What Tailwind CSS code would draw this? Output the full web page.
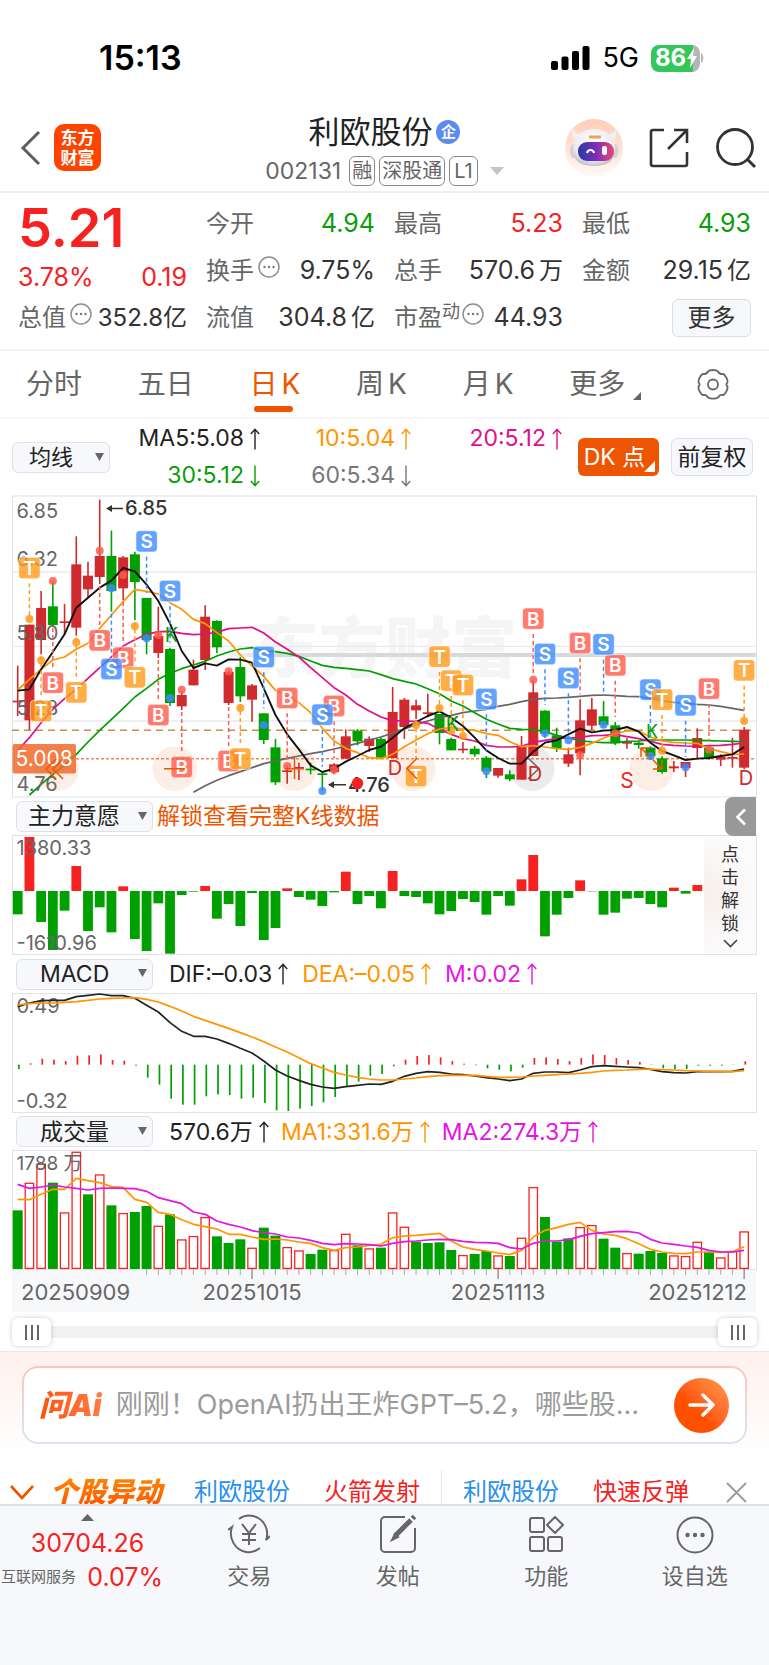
<!DOCTYPE html>
<html lang="zh-CN">
<head>
<meta charset="utf-8">
<meta name="viewport" content="width=device-width, initial-scale=1">
<title>利欧股份 002131</title>
<script src="https://cdn.jsdelivr.net/npm/@tailwindcss/browser@4"></script>
</head>
<body class="bg-white text-[#333] font-['Inter','Noto_Sans_CJK_SC',sans-serif]">
<svg class="hidden" aria-hidden="true">
  <symbol id="up" viewBox="0 0 10 22"><path d="M5 21.500V1.500M.8 6 5 1.300 9.200 6" fill="none" stroke="currentColor" stroke-width="1.400"/></symbol>
  <symbol id="down" viewBox="0 0 10 22"><path d="M5 .5v20M.8 16 5 20.700 9.200 16" fill="none" stroke="currentColor" stroke-width="1.400"/></symbol>
  <symbol id="info" viewBox="0 0 22 22"><circle cx="11" cy="11" r="10" fill="none" stroke="#8f8f8f" stroke-width="1.500"/><g fill="#777"><circle cx="6.500" cy="11" r="1.200"/><circle cx="11" cy="11" r="1.200"/><circle cx="15.500" cy="11" r="1.200"/></g></symbol>
</svg>

<div class="flex h-[112px] items-center justify-between pt-1 pl-[99px] pr-[65px] text-black">
  <span class="text-[34px] leading-10 font-semibold">15:13</span>
  <div class="flex items-center">
    <svg class="h-6 w-10" viewBox="0 0 40 24"><g><rect x="1" y="15" width="7" height="9" rx="2"/><rect x="11.500" y="10.500" width="7" height="13.500" rx="2"/><rect x="22" y="5" width="7" height="19" rx="2"/><rect x="32.500" y="0" width="7" height="24" rx="2"/></g></svg>
    <span class="ml-3 text-[27px] leading-8">5G</span>
    <span class="relative ml-3 flex h-[27px] w-[49px] items-center overflow-hidden rounded-lg bg-[linear-gradient(90deg,#34c759_86%,#b5b5b5_86%)] pl-1 text-[24px] leading-7 font-bold text-white">86
      <svg class="h-5 w-3" viewBox="0 0 12 20"><path d="M8 0 1 11h4l-1 9 7-12H7z" fill="#fff"/></svg></span>
    <svg class="h-3 w-1" viewBox="0 0 4 12"><path d="M1 1c3 1 3 9 0 10z" fill="#b5b5b5"/></svg>
  </div>
</div>

<header class="grid h-[81px] grid-cols-[1fr_auto_1fr] border-b-2 border-[#eee]">
  <div class="flex items-center gap-3 pb-2 pl-5">
    <button aria-label="返回"><svg class="h-9 w-[22px]" viewBox="0 0 22 36"><path d="M19 2 3 18l16 16" fill="none" stroke="#5e5e5e" stroke-width="3"/></svg></button>
    <a href="#" class="flex h-[47px] w-[47px] flex-col items-center justify-center rounded-[10px] bg-[#ff4400] text-[17px] leading-[20px] font-bold text-white"><span>东方</span><span>财富</span></a>
  </div>
  <div class="flex flex-col items-center">
    <h1 class="flex items-center gap-1 text-[31px] leading-[40px] text-[#222]">利欧股份<span class="flex h-6 w-6 items-center justify-center rounded-full bg-[#5b8bee] text-[15px] leading-5 font-bold text-white">企</span></h1>
    <div class="mt-1 flex items-center gap-1 text-[23px] leading-7 text-[#666]">
      <span class="mr-1">002131</span>
      <span class="rounded-md border border-[#888] px-0.5 text-[20px]">融</span>
      <span class="rounded-md border border-[#888] px-0.5 text-[20px]">深股通</span>
      <span class="rounded-md border border-[#888] px-1 text-[20px]">L1</span>
      <svg class="ml-2 h-2 w-[14px]" viewBox="0 0 14 8"><path d="M0 0h14L7 8z" fill="#c4c4c4"/></svg>
    </div>
  </div>
  <div class="flex items-center justify-end gap-[26px] pr-[12px] pb-2">
    <button aria-label="智能助手"><svg class="h-[58px] w-[58px]" viewBox="0 0 58 58">
      <defs><linearGradient id="halo" x2="0" y2="1"><stop stop-color="#ffcdb5"/><stop offset="1" stop-color="#fffaf7"/></linearGradient>
      <linearGradient id="visor" x2="1" y2="0"><stop stop-color="#2739a6"/><stop offset=".5" stop-color="#7a2fb5"/><stop offset="1" stop-color="#e84a78"/></linearGradient>
      <radialGradient id="helmet" cx=".5" cy=".35" r=".7"><stop stop-color="#fff"/><stop offset=".7" stop-color="#eceaf0"/><stop offset="1" stop-color="#b9b4c0"/></radialGradient></defs>
      <circle cx="29" cy="29" r="29" fill="url(#halo)"/>
      <path d="M9 21C6 17 7 12 8 10c1 3 4 5 8 6zM49 21c3-4 3-9 2-11-1 3-4 5-8 6z" fill="#f4f0f2"/>
      <ellipse cx="8.500" cy="32" rx="3.500" ry="7" fill="#d5d1db"/><ellipse cx="50" cy="32" rx="3.500" ry="7" fill="#d5d1db"/>
      <path d="M29 10c13 0 21 8 21 20S43 47 29 47 8 42 8 30s8-20 21-20z" fill="url(#helmet)"/>
      <path d="M24 18h12" stroke="#eda35b" stroke-width="3"/>
      <rect x="13" y="23" width="36" height="19" rx="9" fill="url(#visor)"/>
      <path d="M22 34c1-4 6-4 7 0" fill="none" stroke="#fff" stroke-width="2"/><rect x="37" y="27" width="5" height="9" rx="2" fill="#fff"/>
    </svg></button>
    <button aria-label="分享"><svg class="h-10 w-10" viewBox="0 0 40 40"><path d="M15 2H4a2 2 0 0 0-2 2v32a2 2 0 0 0 2 2h32a2 2 0 0 0 2-2V24M25 2h13v13M38 2 19 21" fill="none" stroke="#333" stroke-width="2.600"/></svg></button>
    <button aria-label="搜索"><svg class="h-[42px] w-[42px]" viewBox="0 0 42 42"><circle cx="20" cy="20" r="17.500" fill="none" stroke="#333" stroke-width="2.800"/><path d="m32 32 8 8" stroke="#333" stroke-width="3"/></svg></button>
  </div>
</header>

<section class="grid grid-cols-4 gap-x-[19px] border-b-2 border-[#f4f4f4] px-[18px] pt-[7px] pb-[8px] text-[25px] leading-[47px] text-[#333]">
  <div class="flex flex-col">
    <div class="h-[58px] text-[54px] leading-[56px] font-semibold text-[#f62222]">5.21</div>
    <div class="flex h-[36px] justify-between leading-[38px] text-[#f62222]"><span>3.78%</span><span>0.19</span></div>
    <div class="flex h-[47px] items-center justify-between whitespace-nowrap text-[24px]"><span class="flex items-center text-[24px] text-[#666]">总值<svg class="mb-2 ml-1 h-[22px] w-[22px]"><use href="#info"/></svg></span><span>352.8亿</span></div>
  </div>
  <div class="whitespace-nowrap">
    <div class="flex h-[47px] justify-between"><span class="text-[24px] text-[#666]">今开</span><span class="text-[#0a9d0a]">4.94</span></div>
    <div class="flex h-[47px] justify-between"><span class="flex items-center text-[24px] text-[#666]">换手<svg class="mb-2 ml-1 h-[22px] w-[22px]"><use href="#info"/></svg></span><span>9.75%</span></div>
    <div class="flex h-[47px] justify-between"><span class="text-[24px] text-[#666]">流值</span><span>304.8<span class="ml-1 text-[24px]">亿</span></span></div>
  </div>
  <div class="whitespace-nowrap">
    <div class="flex h-[47px] justify-between"><span class="text-[24px] text-[#666]">最高</span><span class="text-[#f62222]">5.23</span></div>
    <div class="flex h-[47px] justify-between"><span class="text-[24px] text-[#666]">总手</span><span>570.6<span class="ml-1 text-[24px]">万</span></span></div>
    <div class="flex h-[47px] justify-between"><span class="flex items-center text-[24px] text-[#666]">市盈<span class="mb-3 text-[18px] leading-6">动</span><svg class="mb-2 ml-0.5 h-[22px] w-[22px]"><use href="#info"/></svg></span><span>44.93</span></div>
  </div>
  <div class="whitespace-nowrap">
    <div class="flex h-[47px] justify-between"><span class="text-[24px] text-[#666]">最低</span><span class="text-[#0a9d0a]">4.93</span></div>
    <div class="flex h-[47px] justify-between"><span class="text-[24px] text-[#666]">金额</span><span>29.15<span class="ml-1 text-[24px]">亿</span></span></div>
    <div class="flex h-[47px] items-center justify-end"><button class="h-[38px] w-[79px] rounded-md border border-[#dcdde2] bg-[#f7f8fb] text-[24px] leading-8">更多</button></div>
  </div>
</section>

<nav class="flex h-[68px] items-center justify-between border-b-2 border-[#f6f6f6] px-[26px] text-[28px] leading-10 text-[#666]">
  <a href="#">分时</a><a href="#">五日</a>
  <a href="#" class="relative flex gap-1 text-[#ee5500]"><span>日</span><span>K</span><span class="absolute -bottom-2 left-1 h-[6px] w-[39px] rounded-full bg-[#ee5500]"></span></a>
  <a href="#" class="flex gap-1"><span>周</span><span>K</span></a><a href="#" class="flex gap-1"><span>月</span><span>K</span></a>
  <a href="#" class="flex items-end">更多<svg class="mb-1 ml-2 h-2 w-2" viewBox="0 0 8 8"><path d="M8 0v8H0z" fill="#666"/></svg></a>
  <button aria-label="设置" class="mr-[14px]"><svg class="h-8 w-8" viewBox="0 0 32 32"><path d="M11 3.500c2-2 8-2 10 0 1 2 3 3 5.500 2.500C29 8 31 12 30.500 14.500c-1.500 1-1.500 2.500 0 4C31 21 29 25 26.500 27c-2.500-.5-4.500.5-5.500 2.500-2 1.500-8 1.500-10 0-1-2-3-3-5.500-2.500C3 25 1 21 1.500 18.500c1.500-1.500 1.500-3 0-4C1 12 3 8 5.500 6 8 6.500 10 5.500 11 3.500z" fill="none" stroke="#666" stroke-width="1.800"/><circle cx="16" cy="16.500" r="5" fill="none" stroke="#666" stroke-width="1.800"/></svg></button>
</nav>

<section class="flex h-[76px] items-center pr-[16px] pl-3">
  <div class="relative">
    <select aria-label="主图指标" class="h-[31px] w-[98px] appearance-none rounded-md border border-[#dfe1e6] bg-[#f7f8fb] pl-4 text-[22px] leading-7 text-[#222]"><option>均线</option></select>
    <svg class="pointer-events-none absolute top-[11px] right-[6px] h-2 w-[9px]" viewBox="0 0 9 8"><path d="M0 0h9L4.500 8z" fill="#666"/></svg></div>
  <dl class="mr-4 ml-auto grid grid-cols-[auto_auto_auto] gap-x-[34px] text-right text-[23px] leading-[37px]">
    <div class="flex items-center justify-end text-[#222]">MA5:5.08<svg class="ml-1.5 h-[22px] w-[10px]"><use href="#up"/></svg></div>
    <div class="flex w-[117px] items-center justify-end text-[#ff9500]">10:5.04<svg class="ml-1.5 h-[22px] w-[10px]"><use href="#up"/></svg></div>
    <div class="flex w-[117px] items-center justify-end text-[#e0108a]">20:5.12<svg class="ml-1.5 h-[22px] w-[10px]"><use href="#up"/></svg></div>
    <div class="flex items-center justify-end text-[#0a9d0a]">30:5.12<svg class="ml-1.5 h-[22px] w-[10px]"><use href="#down"/></svg></div>
    <div class="flex items-center justify-end text-[#777]">60:5.34<svg class="ml-1.5 h-[22px] w-[10px]"><use href="#down"/></svg></div>
  </dl>
  <div class="flex gap-3">
    <button class="relative h-[38px] w-[81px] rounded-md bg-[#ee5500] pr-2 text-[23px] leading-8 text-white">DK 点<svg class="absolute right-1 bottom-1 h-[11px] w-[11px]" viewBox="0 0 11 11"><path d="M11 0v11H0z" fill="#fff"/></svg></button>
    <button class="h-[38px] w-[82px] rounded-md border border-[#dfe1e6] bg-[#f7f8fb] text-[23px] leading-8 text-[#222]">前复权</button>
  </div>
</section>

<svg id="kline" class="block w-full" viewBox="0 4 769 304" role="img" aria-label="日K线图"></svg>

<div class="relative">
  <div class="flex h-[34px] items-center pl-4">
    <div class="relative">
      <select aria-label="副图一指标" class="h-[31px] w-[137px] appearance-none rounded-md border border-[#dfe1e6] bg-[#f7f8fb] pl-[11px] text-[23px] leading-7 text-[#222]"><option>主力意愿</option></select>
      <svg class="pointer-events-none absolute top-[11px] right-[6px] h-2 w-[9px]" viewBox="0 0 9 8"><path d="M0 0h9L4.500 8z" fill="#666"/></svg></div>
    <a href="#" class="ml-1 text-[23px] leading-8 text-[#ee5500]">解锁查看完整K线数据</a>
  </div>
  <svg id="will" class="block w-full" viewBox="0 42 769 123" role="img" aria-label="主力意愿"></svg>
  <button aria-label="展开" class="absolute -top-0.5 right-[13px] flex h-[39px] w-[31px] items-center justify-center rounded-l-lg bg-[#999]"><svg class="h-[18px] w-3" viewBox="0 0 12 18"><path d="m10 1.500-7.500 7.500 7.500 7.500" fill="none" stroke="#fff" stroke-width="2.600"/></svg></button>
  <button class="absolute top-[37px] right-[13px] flex h-[118px] w-[52px] flex-col items-center justify-center bg-[radial-gradient(ellipse_at_left,#f7efea,#fbfbfc_70%)] text-[18px] leading-[23px] text-[#333]"><span>点</span><span>击</span><span>解</span><span>锁</span><svg class="mt-1 h-[9px] w-[15px]" viewBox="0 0 15 9"><path d="m1 1 6.500 6.500L14 1" fill="none" stroke="#444" stroke-width="1.600"/></svg></button>
</div>

<div class="flex h-[36px] items-center pl-4 text-[23px] leading-8">
  <div class="relative mr-4">
    <select aria-label="副图二指标" class="h-[31px] w-[137px] appearance-none rounded-md border border-[#dfe1e6] bg-[#f7f8fb] pl-[23px] text-[23px] leading-7 text-[#222]"><option>MACD</option></select>
    <svg class="pointer-events-none absolute top-[11px] right-[6px] h-2 w-[9px]" viewBox="0 0 9 8"><path d="M0 0h9L4.500 8z" fill="#666"/></svg></div>
  <span class="flex items-center text-[#222]">DIF:–0.03<svg class="mx-1.5 h-[22px] w-[10px]"><use href="#up"/></svg></span>
  <span class="ml-2 flex items-center text-[#ff9500]">DEA:–0.05<svg class="mx-1.5 h-[22px] w-[10px]"><use href="#up"/></svg></span>
  <span class="ml-2 flex items-center text-[#e414e4]">M:0.02<svg class="mx-1.5 h-[22px] w-[10px]"><use href="#up"/></svg></span>
</div>
<svg id="macd" class="block w-full" viewBox="0 1 769 122" role="img" aria-label="MACD"></svg>

<div class="flex h-[35px] items-center pl-4 text-[23px] leading-8">
  <div class="relative mr-4">
    <select aria-label="副图三指标" class="h-[31px] w-[137px] appearance-none rounded-md border border-[#dfe1e6] bg-[#f7f8fb] pl-[23px] text-[23px] leading-7 text-[#222]"><option>成交量</option></select>
    <svg class="pointer-events-none absolute top-[11px] right-[6px] h-2 w-[9px]" viewBox="0 0 9 8"><path d="M0 0h9L4.500 8z" fill="#666"/></svg></div>
  <span class="flex items-center text-[#222]">570.6万<svg class="mx-1.5 h-[22px] w-[10px]"><use href="#up"/></svg></span>
  <span class="ml-1.5 flex items-center text-[#ff9500]">MA1:331.6万<svg class="mx-1.5 h-[22px] w-[10px]"><use href="#up"/></svg></span>
  <span class="ml-1.5 flex items-center text-[#e414e4]">MA2:274.3万<svg class="mx-1.5 h-[22px] w-[10px]"><use href="#up"/></svg></span>
</div>
<svg id="volume" class="block w-full" viewBox="0 98 769 163" role="img" aria-label="成交量"></svg>

<div class="border-b border-[#e8e8ea] px-3 pt-[6px] pb-[5px]">
  <div class="relative h-7">
    <div class="absolute inset-x-2 top-2 h-3 bg-[#f1f1f4]"></div>
    <input aria-label="起始日期" type="range" value="0" class="pointer-events-none absolute inset-0 h-7 w-full appearance-none bg-transparent [&::-webkit-slider-thumb]:pointer-events-auto [&::-webkit-slider-thumb]:h-7 [&::-webkit-slider-thumb]:w-[39px] [&::-webkit-slider-thumb]:appearance-none [&::-webkit-slider-thumb]:rounded-md [&::-webkit-slider-thumb]:bg-white [&::-webkit-slider-thumb]:bg-[linear-gradient(90deg,#666_0_2px,transparent_2px_6px,#666_6px_8px,transparent_8px_12px,#666_12px_14px)] [&::-webkit-slider-thumb]:bg-[length:14px_15px] [&::-webkit-slider-thumb]:bg-center [&::-webkit-slider-thumb]:bg-no-repeat [&::-webkit-slider-thumb]:shadow-[0_0_5px_rgba(0,0,0,0.2)]">
    <input aria-label="结束日期" type="range" value="100" class="pointer-events-none absolute inset-0 h-7 w-full appearance-none bg-transparent [&::-webkit-slider-thumb]:pointer-events-auto [&::-webkit-slider-thumb]:h-7 [&::-webkit-slider-thumb]:w-[39px] [&::-webkit-slider-thumb]:appearance-none [&::-webkit-slider-thumb]:rounded-md [&::-webkit-slider-thumb]:bg-white [&::-webkit-slider-thumb]:bg-[linear-gradient(90deg,#666_0_2px,transparent_2px_6px,#666_6px_8px,transparent_8px_12px,#666_12px_14px)] [&::-webkit-slider-thumb]:bg-[length:14px_15px] [&::-webkit-slider-thumb]:bg-center [&::-webkit-slider-thumb]:bg-no-repeat [&::-webkit-slider-thumb]:shadow-[0_0_5px_rgba(0,0,0,0.2)]">
  </div>
</div>

<section class="bg-linear-to-b from-[#fff1ec] to-white px-[22px] pt-[14px] pb-[14px]">
  <div class="rounded-2xl bg-linear-to-b from-[#ffc5b8] to-[#dbe4f8] p-0.5">
    <div class="flex h-[74px] items-center gap-[10px] rounded-[14px] bg-white pr-4 pl-[15px]">
      <span class="bg-linear-to-r from-[#ff5200] to-[#ff7d45] bg-clip-text pr-1 text-[30px] leading-10 font-black text-transparent italic">问Ai</span>
      <input aria-label="问AI" placeholder="刚刚！OpenAI扔出王炸GPT–5.2，哪些股…" class="min-w-0 flex-1 bg-transparent text-[27px] leading-10 outline-none placeholder:text-[#9b9b9b]">
      <button aria-label="发送" class="flex h-[55px] w-[55px] items-center justify-center rounded-full bg-linear-to-tr from-[#ff5000] from-40% to-[#ff9a4d]"><svg class="h-6 w-7" viewBox="0 0 28 24"><path d="M2 12h23M15 2l10 10-10 10" fill="none" stroke="#fff" stroke-width="3.400" stroke-linecap="round" stroke-linejoin="round"/></svg></button>
    </div>
  </div>
</section>

<section class="flex h-[46px] items-start overflow-hidden pt-4 pr-[22px] pl-[10px] text-[24px] leading-9 whitespace-nowrap">
  <button aria-label="收起" class="flex h-9 items-center"><svg class="h-[15px] w-6" viewBox="0 0 24 15"><path d="m1 1 11 12L23 1" fill="none" stroke="#ee5500" stroke-width="2.600"/></svg></button>
  <strong class="ml-4 bg-linear-to-b from-[#ff8a00] to-[#ff4d00] bg-clip-text pr-1 text-[28px] font-black text-transparent italic">个股异动</strong>
  <div class="flex flex-1 pl-[28px]">
    <a href="#" class="text-[#2a8fee]">利欧股份</a><a href="#" class="ml-[34px] text-[#f62222]">火箭发射</a>
    <span class="mx-[21px] -mt-1 h-12 w-px bg-[#e8e8e8]"></span>
    <a href="#" class="text-[#2a8fee]">利欧股份</a><a href="#" class="ml-[34px] text-[#f62222]">快速反弹</a>
    <button aria-label="关闭" class="ml-auto h-9"><svg class="h-[21px] w-[21px]" viewBox="0 0 21 21"><path d="m1 1 19 19M20 1 1 20" stroke="#999" stroke-width="1.800"/></svg></button>
  </div>
</section>

<footer class="flex h-[162px] border-t-2 border-[#dedfe3] bg-[#f7f8fb] text-[#666]">
  <a href="#" class="flex w-[175px] flex-col items-center whitespace-nowrap text-[#f62222]">
    <svg class="mt-2 h-[7px] w-[13px]" viewBox="0 0 13 7"><path d="M0 7h13L6.500 0z" fill="#666"/></svg>
    <span class="mt-1 text-[25px] leading-9">30704.26</span>
    <span class="flex w-full items-center justify-between pr-3 pl-px text-[25px] leading-8"><span class="text-[15px] text-[#666]">互联网服务</span>0.07%</span>
  </a>
  <a href="#" class="flex flex-1 flex-col items-center pt-2 text-[22px] leading-9">
    <svg class="mb-1 h-10 w-[42px]" viewBox="0 0 42 40" fill="none" stroke="#666" stroke-width="2"><path d="M11 5C15 2 20 1 25 2c10 2 17 13 13 24l4-4M32 34c-4 3-9 5-14 4C7 36 0 24 4 13l-4 3"/><path d="m14 10 7 9 7-9M21 19v12M14 20h14M14 26h14"/></svg>交易</a>
  <a href="#" class="flex flex-1 flex-col items-center pt-2 text-[22px] leading-9">
    <svg class="mb-1 h-10 w-10" viewBox="0 0 40 40" fill="none" stroke="#666" stroke-width="2"><path d="M27 3H7a4 4 0 0 0-4 4v27a4 4 0 0 0 4 4h26a4 4 0 0 0 4-4V14"/><path d="M33 6 17 22M34.500 4.500 36.500 2.500" stroke-width="5"/><path d="m17 20-3 6 6-3z" fill="#666"/></svg>发帖</a>
  <a href="#" class="flex flex-1 flex-col items-center pt-2 text-[22px] leading-9">
    <svg class="mb-1 h-10 w-10" viewBox="0 0 40 40" fill="none" stroke="#666" stroke-width="2"><rect x="4" y="4" width="14" height="14" rx="2"/><rect x="4" y="23" width="14" height="14" rx="2"/><rect x="22" y="23" width="14" height="14" rx="2"/><path d="m29 3 8 8-8 8-8-8z" stroke-linejoin="round"/></svg>功能</a>
  <a href="#" class="flex flex-1 flex-col items-center pt-2 text-[22px] leading-9">
    <svg class="mb-1 h-10 w-10" viewBox="0 0 40 40" fill="none" stroke="#666" stroke-width="2"><circle cx="20" cy="21" r="17.500"/><g fill="#666" stroke="none"><circle cx="12.500" cy="21" r="2.200"/><circle cx="20" cy="21" r="2.200"/><circle cx="27.500" cy="21" r="2.200"/></g></svg>设自选</a>
</footer>

<script>
// Series values are stored in thirds of a chart unit, one entry per trading day.
const RED = '#d02a2e', GREEN = '#00a000', HOT = '#f62222';
const X = i => 17.7 + 11.717 * i, Y = v => v / 3;
const line = (x1, y1, x2, y2, c, w = 1, extra = '') => `<line x1="${x1}" y1="${y1}" x2="${x2}" y2="${y2}" stroke="${c}" stroke-width="${w}" ${extra}/>`;
const rect = (x, y, w, h, c, extra = '') => `<rect x="${x}" y="${y}" width="${w}" height="${h}" fill="${c}" ${extra}/>`;
const text = (x, y, s, c = '#666', size = 20, extra = '') => `<text x="${x}" y="${y}" fill="${c}" font-size="${size}" ${extra}>${s}</text>`;
const poly = (vals, c, start = 0, w = 1.7) => `<polyline fill="none" stroke="${c}" stroke-width="${w}" stroke-linejoin="round" points="${vals.map((v, i) => X(i + start) + ',' + Y(v)).join(' ')}"/>`;
const frame = (y, h) => `<rect x="12.500" y="${y}" width="744" height="${h}" fill="none" stroke="#e0e2e6"/>`;

// [colour, high, body top, body bottom, low]
const candles = `R524,629,634,675 R401,401,688,717 R300,351,447,490 G270,346,402,405 R339,391,396,430 R136,220,410,434 R212,254,295,319 R26,195,258,279 G119,195,300,362 R195,199,292,327 G182,190,273,388 G321,321,447,490 R347,435,486,501 G470,474,636,645 R600,612,646,657 R506,536,583,583 R343,377,507,537 G388,390,469,486 R540,543,636,642 G498,528,616,633 R579,583,626,692
G667,667,747,759 G744,769,874,882 R825,838,843,878 R815,828,834,867 G815,833,838,850 G842,847,852,900 R817,820,843,850 R715,736,803,803 G714,719,751,763 R736,743,765,783 G738,744,800,804 R588,663,801,801 R621,626,708,744 R626,643,658,684 R608,664,669,679 G669,669,726,760 G740,744,778,778 R753,773,778,787 G765,773,790,797 G795,800,841,861 R831,831,854,860 G838,850,865,870
R735,768,866,866 R566,604,795,795 G657,659,728,740 G710,733,772,783 R770,790,818,828 R625,688,787,853 R621,655,704,717 G630,676,702,710 G693,703,757,762 R741,753,758,773 G750,755,762,773 G766,770,796,806 G796,802,843,848 R810,826,832,843 R813,813,831,858 R712,741,771,802 G765,770,800,806 R790,797,806,825 R741,798,803,830 R708,716,830,835`.split(/\s+/).map(s => [s[0], ...s.slice(1).split(',').map(Number)]);
const ma5 = [599,595,535,483,430,350,320,290,269,231,241,281,330,398,480,531,517,524,505,506,515,592,672,730,775,823,843,833,812,795,777,767,740,712,693,675,661,680,705,740,778,801,818,818,782,755,748,730,713,724,719,717,708,722,755,780,793,807,803,801,795,790,768];
const ma10 = [597,565,535,507,498,475,457,412,372,332,295,301,309,335,355,385,398,425,450,492,525,556,598,615,635,665,712,750,772,785,800,803,790,767,747,728,714,709,714,718,728,733,752,767,764,768,773,775,769,757,742,728,720,720,738,750,754,756,757,773,782,790,789];
const ma20 = [778,740,695,655,623,595,562,530,498,465,446,430,422,421,427,431,429,424,413,411,409,426,453,475,498,530,560,590,612,640,660,678,689,690,691,697,715,730,743,750,763,768,768,766,754,748,743,741,739,734,733,731,737,743,751,760,763,765,766,764,763,760,756];
const ma30 = [912,880,850,822,790,753,718,685,652,618,592,565,547,533,522,511,495,483,474,470,480,482,487,496,510,523,529,532,536,540,551,563,571,579,593,608,630,645,665,685,699,712,715,716,722,733,741,749,753,755,755,751,750,747,747,747,747,748,749,750,751,752];
const ma60 = [904,884,868,854,842,830,818,810,802,795,788,782,774,766,757,747,738,726,714,701,690,680,673,665,660,655,646,640,632,625,622,621,619,616,613,612,614,616,617,623,630,634,637,640,642,646,652,658];
const tint = { B: '#ff5a4a', S: '#3a8cff', T: '#ff9a1a' };
// day: [badge position, dot position]
const signals = {
  B: { 3: [575,270], 7: [448,179], 9: [500,252], 12: [672,432], 14: [828,596], 18: [810,541], 23: [621,825], 27: [645,836], 44: [383,566], 48: [456,793], 51: [523,727], 59: [593,776] },
  S: { 8: [534,292], 11: [151,442], 13: [300,621], 21: [498,702], 26: [671,900], 40: [624,841], 45: [489,727], 47: [561,748], 50: [460,701], 54: [596,795], 57: [643,829] },
  T: { 1: [231,384], 2: [660,508], 5: [604,454], 10: [559,406], 19: [803,651], 34: [855,702], 36: [497,651], 37: [569,720], 38: [582,735], 55: [626,779], 62: [538,690] }
};

let k = `<defs><linearGradient id="fade" x2="1" y2="0"><stop stop-color="#d6d9de" stop-opacity="0"/><stop offset=".1" stop-color="#d6d9de"/></linearGradient></defs>`;
k += frame(5, 301) + text(251, 672, '', '#f5f5f6') + text(253, 181, '东方财富', '#f5f5f6', 66, 'font-weight="900"');
[243, 466, 690].forEach(v => k += line(12, Y(v), 756, Y(v), '#e6ebf0', 1.3));
k += rect(215, 162, 541, 4, 'url(#fade)');
k += line(12, Y(718), 756, Y(718), '#c98d4c', 1.5, 'stroke-dasharray="7 5"') + line(76, Y(803), 756, Y(803), '#f08a50', 1.5, 'stroke-dasharray="3 2"');
[[56.7, '#ee5500'], [174.7, '#ee5500'], [294.3, '#ee5500'], [413.3, '#ee5500'], [532.3, '#444'], [651.7, '#ee5500']].forEach(([x, c]) => k += `<circle cx="${x}" cy="277.700" r="22.300" fill="${c}" fill-opacity=".1"/>`);
candles.forEach(([d, h, a, b, l], i) => {
  const c = d === 'R' ? RED : GREEN;
  k += line(X(i), Y(h), X(i), Y(l), c, 1.6) + rect(X(i) - 5, Y(a), 10, Math.max(1.7, Y(b - a)), c);
});
k += poly(ma60, '#666', 15) + poly(ma30, GREEN, 1) + poly(ma20, '#e0108a') + poly(ma10, '#ff9500') + poly(ma5, '#111', 0, 1.9);
['6.85,26.700', '6.32,74.700', '5.80,149.300', '5.28,224', '4.76,300'].forEach(s => { const [t, y] = s.split(','); k += text(16.5, y, t); });
k += rect(12.5, 253, 63.5, 29.5, '#ee6a2a', 'rx="2" fill-opacity=".85"') + text(15.5, 275, '5.008', '#fff', 21);
for (const t in signals) for (const d in signals[t]) {
  const [b, p] = signals[t][d], x = X(+d), c = candles[d], up = b < c[1];
  k += `<circle cx="${x}" cy="${Y(p)}" r="4" fill="${tint[t]}" fill-opacity=".85"/>`;
  k += up ? line(x, Y(b + 46), x, Y(Math.max(c[1] - 15, b + 50)), tint[t], 1.5, 'stroke-dasharray="4 3"') : line(x, Y(c[4] + 6), x, Y(b - 44), tint[t], 1.5, 'stroke-dasharray="4 3"');
}
for (const t in signals) for (const d in signals[t]) {
  const y = Y(signals[t][d][0]), x = X(+d);
  k += rect(x - 10.7, y - 10.7, 21.4, 21.4, tint[t], 'rx="3.500" fill-opacity=".8" stroke="#fff" stroke-width=".6"') + text(x, y + 7, t, '#fff', 19, 'font-weight="600" text-anchor="middle"');
}
k += `<g fill="none" stroke="#ee5500" stroke-width="1.500"><path d="m56 268-10 10 10 10M63 268l-10 10 10 10M164 277.700h21M285 277.700h19M294.500 267v21M417 267l-10 10.500 10 10.500"/><path d="m641 257 9 9M641 266v-9h9M653 269l9 9M662 269v9h-9"/><path d="m528 267 11 10.500-11 10.500" stroke="#666"/></g>`;
k += text(171.5, 151, 'K', GREEN, 20, 'text-anchor="middle"') + text(452.5, 240, 'K', GREEN, 20, 'text-anchor="middle"') + text(652, 247, 'K', GREEN, 18, 'text-anchor="middle"');
k += text(395, 284, 'D', RED, 20, 'text-anchor="middle"') + text(535, 290, 'D', RED, 20, 'text-anchor="middle"') + text(746, 294, 'D', RED, 20, 'text-anchor="middle"') + text(627, 297, 'S', HOT, 21, 'text-anchor="middle"');
k += text(125, 24, '6.85', '#333', 20, 'font-weight="500"') + text(348, 301, '4.76', '#333', 20, 'font-weight="500"') + `<circle cx="357.500" cy="292.300" r="5.800" fill="${HOT}"/>`;
k += `<path d="M123 17.500h-14M329 293.700h17" stroke="#333" stroke-width="1.600"/><path d="m106 17.500 6-3.500v7zM328 293.700l6-3.500v7z" fill="#333"/>`;
kline.innerHTML = k;

const willEnds = [370,138,393,477,359,225,420,349,424,286,444,480,337,488,312,302,285,383,339,405,306,447,411,292,318,326,345,304,242,339,315,352,240,315,318,337,370,360,324,333,371,315,344,265,192,436,371,321,268,301,371,365,323,321,339,349,290,308,282];
will.innerHTML = frame(44.5, 119) + willEnds.map((v, i) => rect(X(i) - 4.9, Y(Math.min(v, 300)), 9.8, Y(Math.abs(v - 300)), v < 300 ? HOT : GREEN)).join('') + text(16.5, 64, '1380.33') + text(16.5, 159, '-1610.96');

const hist = [54,37,23,26,30,14,13,10,27,29,44,80,101,143,161,161,136,130,132,143,140,156,178,180,173,165,154,138,108,92,74,69,46,26,15,12,19,30,38,43,52,56,61,50,21,19,24,30,21,10,12,21,27,33,42,52,55,54,44,44,44,42,31].map(v => v + 180);
const dif = [47,36,29,28,28,17,13,9,14,14,22,43,63,95,121,136,136,144,157,172,186,210,237,255,268,280,288,292,287,283,279,280,271,256,247,242,244,249,251,255,260,264,269,264,247,243,243,245,237,227,224,226,228,230,235,242,245,246,242,242,242,241,234];
const dea = [42,38,36,36,34,32,28,24,22,21,20,25,33,46,60,76,88,100,112,125,138,152,168,183,200,218,231,244,252,259,264,267,267,264,261,257,254,253,253,253,256,259,259,258,255,253,251,249,247,244,240,238,237,235,234,236,237,239,240,241,242,242,239];
macd.innerHTML = frame(2.5, 119) + text(16.5, 21.7, '0.49') + text(16.5, 117, '-0.32') + hist.map((v, i) => rect(X(i) + .3, Y(Math.min(v, 221)), 1.7, Y(Math.abs(v - 221)), v < 221 ? HOT : GREEN)).join('') + poly(dif, '#222') + poly(dea, '#ff9500');

const vol = 'G478 R395 R338 G395 R484 R302 G430 R370 G463 R486 G483 G465 R524 G490 R565 R555 R498 G556 G576 G565 R590 G530 G554 R588 R598 G609 G596 R597 R548 G583 R592 G590 R484 R527 G572 G576 G574 G597 R612 G609 G600 R613 G615 R560 R408 G498 G572 G562 R528 R522 G563 G590 R606 G608 G600 G606 R613 R615 R572 G603 R619 R600 R541'.split(' ');
const vol1 = [445,446,430,415,415,382,389,395,407,409,445,454,484,490,506,520,527,534,550,550,558,565,564,567,573,577,590,598,590,588,583,580,560,555,553,550,547,570,588,595,600,606,611,598,558,538,530,520,514,538,549,553,563,578,595,603,607,608,603,603,604,602,587];
const vol2 = [400,412,408,402,408,412,417,412,411,412,413,421,440,449,458,483,490,510,520,528,539,545,549,558,561,568,577,581,578,579,581,585,577,572,570,567,565,566,571,574,575,577,590,594,577,570,570,566,556,548,545,542,541,546,565,576,580,585,589,598,603,603,598];
let v = rect(12, 218, 744, 43, '#f7f8fa') + frame(99.5, 119);
vol.forEach((s, i) => {
  const y = Y(+s.slice(1)), x = X(i);
  v += s[0] === 'G' ? rect(x - 5, y, 10, 218 - y, GREEN) : rect(x - 4.2, y + .6, 8.4, 216.8 - y, '#fff', `stroke="${HOT}" stroke-width="1.300"`);
  if (i > 10) v += [20, 41, 62].includes(i) ? line(x, 218, x, 228, '#888', 1.3) : line(x, 218, x, 224, '#aaa');
});
v += poly(vol1, '#ff9500') + poly(vol2, '#e414e4') + text(16.5, 119, '1788 万', '#666', 19);
v += text(21, 249, '20250909', '#666', 22) + text(252, 249, '20251015', '#666', 22, 'text-anchor="middle"') + text(498, 249, '20251113', '#666', 22, 'text-anchor="middle"') + text(747, 249, '20251212', '#666', 22, 'text-anchor="end"');
volume.innerHTML = v;
</script>
</body>
</html>
